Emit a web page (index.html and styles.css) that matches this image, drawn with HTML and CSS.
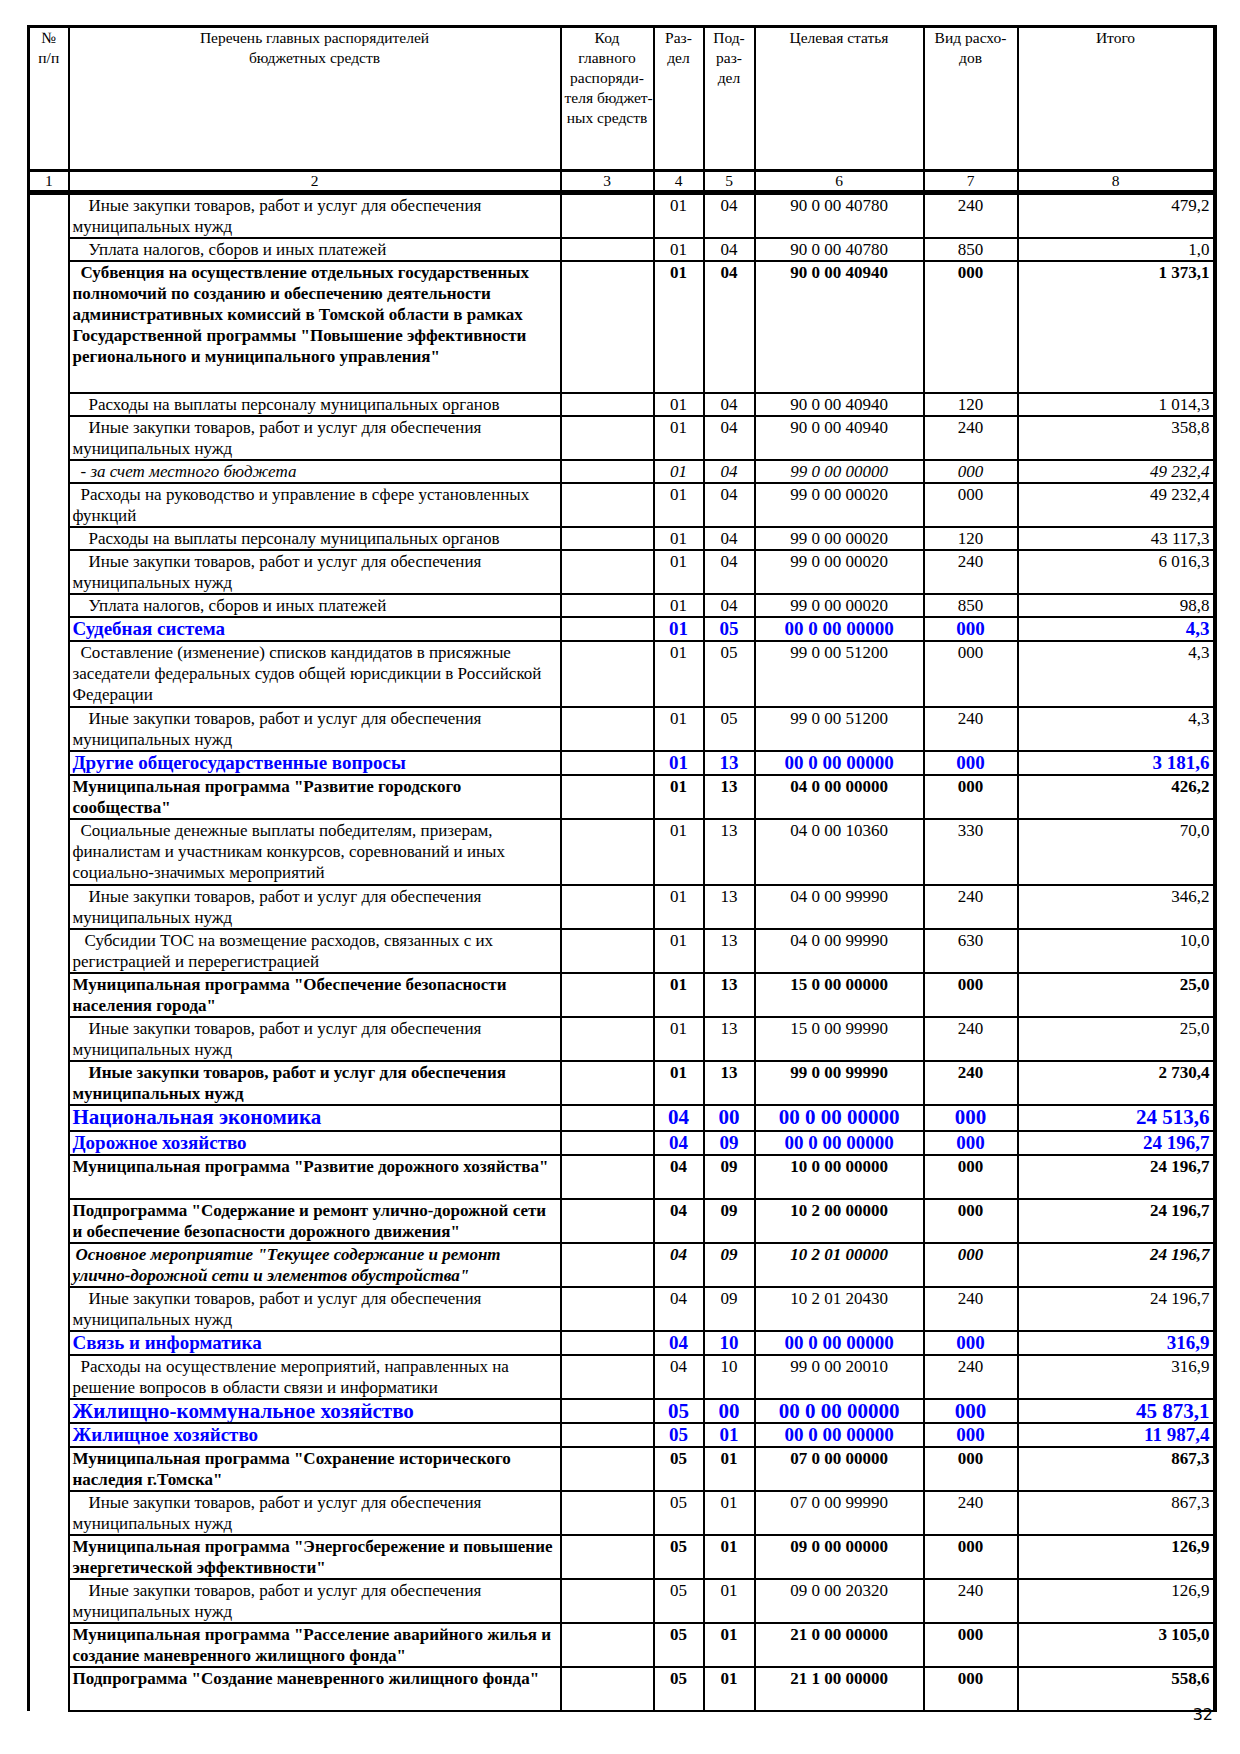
FILE: index.html
```html
<!DOCTYPE html>
<html lang="ru">
<head>
    <meta charset="UTF-8">
    <title>Ведомственная структура расходов</title>
    <link rel="stylesheet" href="styles.css">
</head>
<body>

<div id="page">
    <table class="budget">
        <colgroup>
            <col class="c1"><col class="c2"><col class="c3"><col class="c4">
            <col class="c5"><col class="c6"><col class="c7"><col class="c8">
        </colgroup>
        <thead>
            <tr class="head">
                <th class="first">№<br>п/п</th>
                <th>Перечень главных распорядителей<br>бюджетных средств</th>
                <th>Код<br>главного<br>распоряди-<br>теля бюджет-<br>ных средств</th>
                <th>Раз-<br>дел</th>
                <th>Под-<br>раз-<br>дел</th>
                <th>Целевая статья</th>
                <th>Вид расхо-<br>дов</th>
                <th class="last">Итого</th>
            </tr>
            <tr class="nums">
                <th class="first">1</th><th>2</th><th>3</th><th>4</th>
                <th>5</th><th>6</th><th>7</th><th class="last">8</th>
            </tr>
        </thead>
        <tbody>
            <tr class="l2 reg">
                <td class="first" rowspan="37"></td>
                <td class="name i3">Иные закупки товаров, работ и услуг для обеспечения<br>муниципальных нужд</td>
                <td></td><td>01</td><td>04</td><td>90 0 00 40780</td><td>240</td><td class="sum">479,2</td>
            </tr>
            <tr class="l1 reg">
                <td class="name i3">Уплата налогов, сборов и иных платежей</td>
                <td></td><td>01</td><td>04</td><td>90 0 00 40780</td><td>850</td><td class="sum">1,0</td>
            </tr>
            <tr class="l6 bold">
                <td class="name i1">Субвенция на осуществление отдельных государственных<br>полномочий по созданию и обеспечению деятельности<br>административных комиссий в Томской области в рамках<br>Государственной программы "Повышение эффективности<br>регионального и муниципального управления"</td>
                <td></td><td>01</td><td>04</td><td>90 0 00 40940</td><td>000</td><td class="sum">1 373,1</td>
            </tr>
            <tr class="l1 reg">
                <td class="name i3">Расходы на выплаты персоналу муниципальных органов</td>
                <td></td><td>01</td><td>04</td><td>90 0 00 40940</td><td>120</td><td class="sum">1 014,3</td>
            </tr>
            <tr class="l2 reg">
                <td class="name i3">Иные закупки товаров, работ и услуг для обеспечения<br>муниципальных нужд</td>
                <td></td><td>01</td><td>04</td><td>90 0 00 40940</td><td>240</td><td class="sum">358,8</td>
            </tr>
            <tr class="l1 ital">
                <td class="name i1">- за счет местного бюджета</td>
                <td></td><td>01</td><td>04</td><td>99 0 00 00000</td><td>000</td><td class="sum">49 232,4</td>
            </tr>
            <tr class="l2 reg">
                <td class="name i1">Расходы на руководство и управление в сфере установленных<br>функций</td>
                <td></td><td>01</td><td>04</td><td>99 0 00 00020</td><td>000</td><td class="sum">49 232,4</td>
            </tr>
            <tr class="l1 reg">
                <td class="name i3">Расходы на выплаты персоналу муниципальных органов</td>
                <td></td><td>01</td><td>04</td><td>99 0 00 00020</td><td>120</td><td class="sum">43 117,3</td>
            </tr>
            <tr class="l2 reg">
                <td class="name i3">Иные закупки товаров, работ и услуг для обеспечения<br>муниципальных нужд</td>
                <td></td><td>01</td><td>04</td><td>99 0 00 00020</td><td>240</td><td class="sum">6 016,3</td>
            </tr>
            <tr class="l1 reg">
                <td class="name i3">Уплата налогов, сборов и иных платежей</td>
                <td></td><td>01</td><td>04</td><td>99 0 00 00020</td><td>850</td><td class="sum">98,8</td>
            </tr>
            <tr class="s24 blue">
                <td class="name">Судебная система</td>
                <td></td><td>01</td><td>05</td><td>00 0 00 00000</td><td>000</td><td class="sum">4,3</td>
            </tr>
            <tr class="l3 reg">
                <td class="name i1">Составление (изменение) списков кандидатов в присяжные<br>заседатели федеральных судов общей юрисдикции в Российской<br>Федерации</td>
                <td></td><td>01</td><td>05</td><td>99 0 00 51200</td><td>000</td><td class="sum">4,3</td>
            </tr>
            <tr class="l2 reg">
                <td class="name i3">Иные закупки товаров, работ и услуг для обеспечения<br>муниципальных нужд</td>
                <td></td><td>01</td><td>05</td><td>99 0 00 51200</td><td>240</td><td class="sum">4,3</td>
            </tr>
            <tr class="s24 blue">
                <td class="name">Другие общегосударственные вопросы</td>
                <td></td><td>01</td><td>13</td><td>00 0 00 00000</td><td>000</td><td class="sum">3 181,6</td>
            </tr>
            <tr class="l2 bold">
                <td class="name">Муниципальная программа "Развитие городского<br>сообщества"</td>
                <td></td><td>01</td><td>13</td><td>04 0 00 00000</td><td>000</td><td class="sum">426,2</td>
            </tr>
            <tr class="l3 reg">
                <td class="name i1">Социальные денежные выплаты победителям, призерам,<br>финалистам и участникам конкурсов, соревнований и иных<br>социально-значимых мероприятий</td>
                <td></td><td>01</td><td>13</td><td>04 0 00 10360</td><td>330</td><td class="sum">70,0</td>
            </tr>
            <tr class="l2 reg">
                <td class="name i3">Иные закупки товаров, работ и услуг для обеспечения<br>муниципальных нужд</td>
                <td></td><td>01</td><td>13</td><td>04 0 00 99990</td><td>240</td><td class="sum">346,2</td>
            </tr>
            <tr class="l2 reg">
                <td class="name i2">Субсидии ТОС на возмещение расходов, связанных с их<br>регистрацией и перерегистрацией</td>
                <td></td><td>01</td><td>13</td><td>04 0 00 99990</td><td>630</td><td class="sum">10,0</td>
            </tr>
            <tr class="l2 bold">
                <td class="name">Муниципальная программа "Обеспечение безопасности<br>населения города"</td>
                <td></td><td>01</td><td>13</td><td>15 0 00 00000</td><td>000</td><td class="sum">25,0</td>
            </tr>
            <tr class="l2 reg">
                <td class="name i3">Иные закупки товаров, работ и услуг для обеспечения<br>муниципальных нужд</td>
                <td></td><td>01</td><td>13</td><td>15 0 00 99990</td><td>240</td><td class="sum">25,0</td>
            </tr>
            <tr class="l2 bold">
                <td class="name i3">Иные закупки товаров, работ и услуг для обеспечения<br>муниципальных нужд</td>
                <td></td><td>01</td><td>13</td><td>99 0 00 99990</td><td>240</td><td class="sum">2 730,4</td>
            </tr>
            <tr class="s26 blue big">
                <td class="name">Национальная экономика</td>
                <td></td><td>04</td><td>00</td><td>00 0 00 00000</td><td>000</td><td class="sum">24 513,6</td>
            </tr>
            <tr class="s24 blue">
                <td class="name">Дорожное хозяйство</td>
                <td></td><td>04</td><td>09</td><td>00 0 00 00000</td><td>000</td><td class="sum">24 196,7</td>
            </tr>
            <tr class="l2 bold">
                <td class="name">Муниципальная программа "Развитие дорожного хозяйства"</td>
                <td></td><td>04</td><td>09</td><td>10 0 00 00000</td><td>000</td><td class="sum">24 196,7</td>
            </tr>
            <tr class="l2 bold">
                <td class="name">Подпрограмма "Содержание и ремонт улично-дорожной сети<br>и обеспечение безопасности дорожного движения"</td>
                <td></td><td>04</td><td>09</td><td>10 2 00 00000</td><td>000</td><td class="sum">24 196,7</td>
            </tr>
            <tr class="l2 bold ital">
                <td class="name i0">Основное мероприятие "Текущее содержание и ремонт<br>улично-дорожной сети и элементов обустройства"</td>
                <td></td><td>04</td><td>09</td><td>10 2 01 00000</td><td>000</td><td class="sum">24 196,7</td>
            </tr>
            <tr class="l2 reg">
                <td class="name i3">Иные закупки товаров, работ и услуг для обеспечения<br>муниципальных нужд</td>
                <td></td><td>04</td><td>09</td><td>10 2 01 20430</td><td>240</td><td class="sum">24 196,7</td>
            </tr>
            <tr class="s24 blue">
                <td class="name">Связь и информатика</td>
                <td></td><td>04</td><td>10</td><td>00 0 00 00000</td><td>000</td><td class="sum">316,9</td>
            </tr>
            <tr class="l2 reg">
                <td class="name i1">Расходы на осуществление мероприятий, направленных на<br>решение вопросов в области связи и информатики</td>
                <td></td><td>04</td><td>10</td><td>99 0 00 20010</td><td>240</td><td class="sum">316,9</td>
            </tr>
            <tr class="s24 blue big">
                <td class="name">Жилищно-коммунальное хозяйство</td>
                <td></td><td>05</td><td>00</td><td>00 0 00 00000</td><td>000</td><td class="sum">45 873,1</td>
            </tr>
            <tr class="s24 blue">
                <td class="name">Жилищное хозяйство</td>
                <td></td><td>05</td><td>01</td><td>00 0 00 00000</td><td>000</td><td class="sum">11 987,4</td>
            </tr>
            <tr class="l2 bold">
                <td class="name">Муниципальная программа "Сохранение исторического<br>наследия г.Томска"</td>
                <td></td><td>05</td><td>01</td><td>07 0 00 00000</td><td>000</td><td class="sum">867,3</td>
            </tr>
            <tr class="l2 reg">
                <td class="name i3">Иные закупки товаров, работ и услуг для обеспечения<br>муниципальных нужд</td>
                <td></td><td>05</td><td>01</td><td>07 0 00 99990</td><td>240</td><td class="sum">867,3</td>
            </tr>
            <tr class="l2 bold">
                <td class="name">Муниципальная программа "Энергосбережение и повышение<br>энергетической эффективности"</td>
                <td></td><td>05</td><td>01</td><td>09 0 00 00000</td><td>000</td><td class="sum">126,9</td>
            </tr>
            <tr class="l2 reg">
                <td class="name i3">Иные закупки товаров, работ и услуг для обеспечения<br>муниципальных нужд</td>
                <td></td><td>05</td><td>01</td><td>09 0 00 20320</td><td>240</td><td class="sum">126,9</td>
            </tr>
            <tr class="l2 bold">
                <td class="name">Муниципальная программа "Расселение аварийного жилья и<br>создание маневренного жилищного фонда"</td>
                <td></td><td>05</td><td>01</td><td>21 0 00 00000</td><td>000</td><td class="sum">3 105,0</td>
            </tr>
            <tr class="l2 bold">
                <td class="name">Подпрограмма "Создание маневренного жилищного фонда"</td>
                <td></td><td>05</td><td>01</td><td>21 1 00 00000</td><td>000</td><td class="sum">558,6</td>
            </tr>
        </tbody>
    </table>
    <div class="page-num">32</div>
</div>

</body>
</html>
```

FILE: styles.css
```css
body {
    margin: 0;
    background: #fff;
    color: #000;
    font-family: "Liberation Serif", "Times New Roman", serif;
}

#page {
    width: 1186px;
    padding: 25px 0 0 27px;
}

.budget {
    width: 1186px;
    table-layout: fixed;
    border-collapse: collapse;
}

.c1 { width: 40px; }
.c2 { width: 492px; }
.c3 { width: 93px; }
.c4 { width: 50px; }
.c5 { width: 51px; }
.c6 { width: 169px; }
.c7 { width: 94px; }
.c8 { width: 197px; }

th, td {
    border: 2px solid #000;
    padding: 0 3px;
    vertical-align: top;
    text-align: center;
    white-space: nowrap;
    overflow: hidden;
}

th {
    font-weight: normal;
    font-size: 15.5px;
    line-height: 20px;
}

.head th {
    height: 141px;
    border-top-width: 3px;
    border-bottom-width: 3px;
    padding-top: 0;
}

.nums th {
    height: 18px;
    line-height: 18px;
    border-bottom-width: 5px;
}

.first {
    border-left-width: 3px;
}

.last,
.sum {
    border-right-width: 4px;
}

tbody td.first {
    border-bottom: none;
}

td {
    font-size: 17px;
    line-height: 21px;
}

td.name {
    text-align: left;
}

td.sum {
    text-align: right;
}

.i0 { text-indent: 3px; }
.i1 { text-indent: 8px; }
.i2 { text-indent: 12px; }
.i3 { text-indent: 16px; }

.l1 { height: 22px; }
.l2 { height: 44px; }
.l3 { height: 66px; }
.l6 { height: 132px; }
.s24 { height: 24px; }
.s26 { height: 26px; }

.bold td {
    font-weight: bold;
}

.ital td {
    font-style: italic;
}

.blue td {
    color: #0000ff;
    font-weight: bold;
    font-size: 19px;
    line-height: 22px;
}

.blue.big td {
    font-size: 21px;
}

.page-num {
    width: 1186px;
    margin-top: -6px;
    text-align: right;
    font-family: "DejaVu Sans", sans-serif;
    font-size: 16px;
    line-height: 18px;
}
```
